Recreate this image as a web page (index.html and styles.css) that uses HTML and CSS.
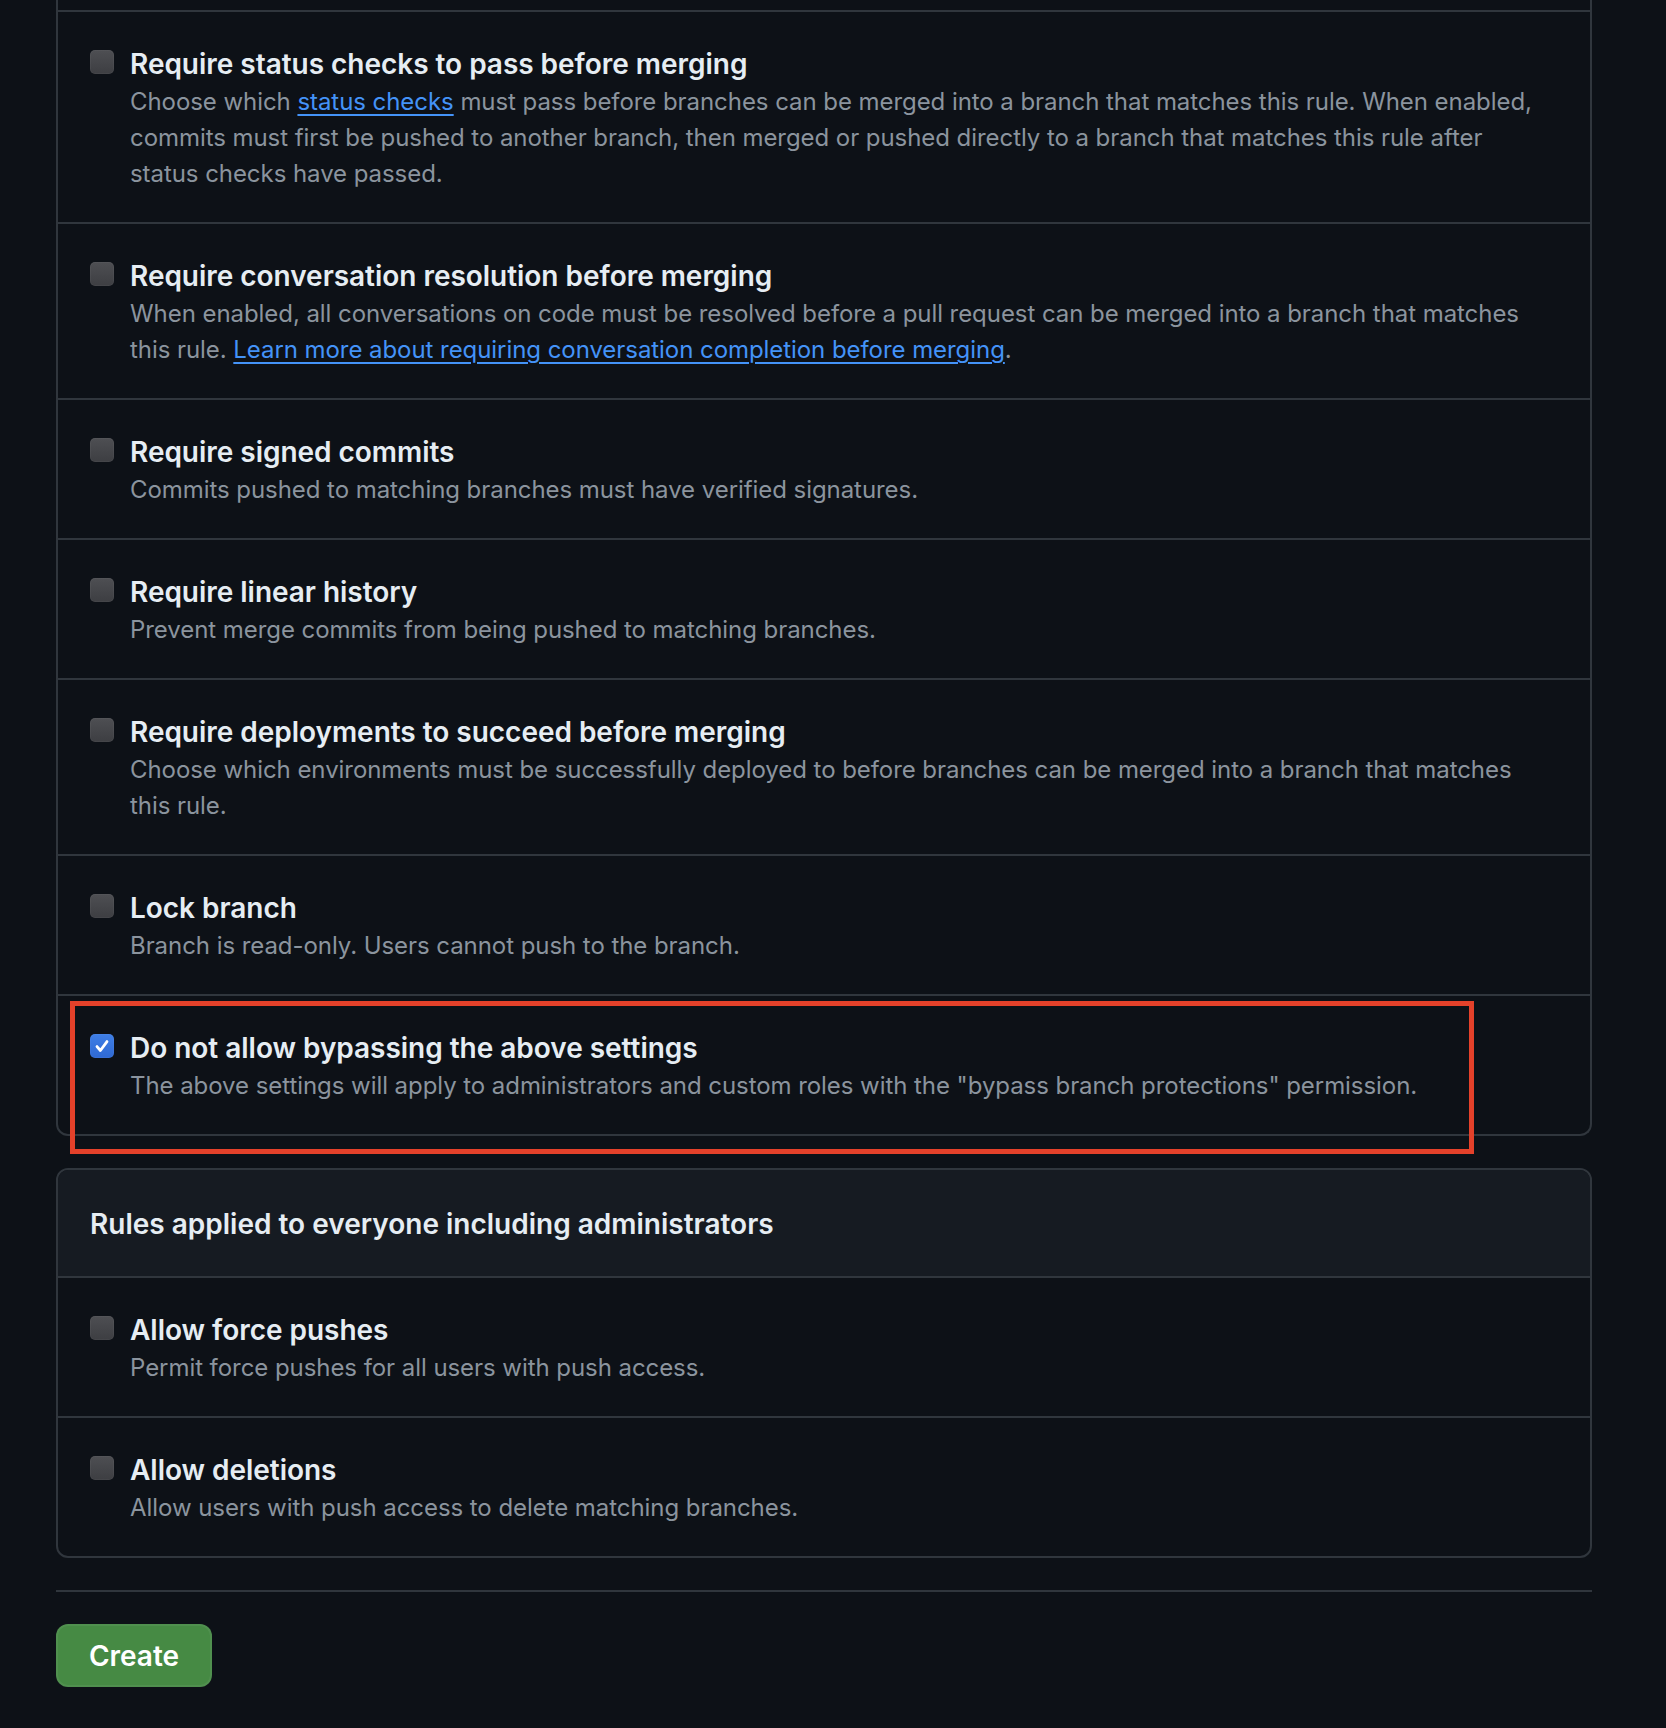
FILE: index.html
```html
<!DOCTYPE html>
<html lang="en">
<head>
<meta charset="utf-8">
<title>Branch protection rule</title>
<link rel="stylesheet" href="styles.css">
</head>
<body>
<main class="page">
  <section class="box box-cut">
    <div class="stub"></div>
    <div class="row">
      <span class="cb"></span>
      <div class="text">
        <div class="title">Require status checks to pass before merging</div>
        <div class="desc">Choose which <a href="#" class="link">status checks</a> must pass before branches can be merged into a branch that matches this rule. When enabled, commits must first be pushed to another branch, then merged or pushed directly to a branch that matches this rule after status checks have passed.</div>
      </div>
    </div>
    <div class="row">
      <span class="cb"></span>
      <div class="text">
        <div class="title">Require conversation resolution before merging</div>
        <div class="desc">When enabled, all conversations on code must be resolved before a pull request can be merged into a branch that matches this rule. <a href="#" class="link">Learn more about requiring conversation completion before merging</a>.</div>
      </div>
    </div>
    <div class="row">
      <span class="cb"></span>
      <div class="text">
        <div class="title">Require signed commits</div>
        <div class="desc">Commits pushed to matching branches must have verified signatures.</div>
      </div>
    </div>
    <div class="row">
      <span class="cb"></span>
      <div class="text">
        <div class="title">Require linear history</div>
        <div class="desc">Prevent merge commits from being pushed to matching branches.</div>
      </div>
    </div>
    <div class="row">
      <span class="cb"></span>
      <div class="text">
        <div class="title">Require deployments to succeed before merging</div>
        <div class="desc">Choose which environments must be successfully deployed to before branches can be merged into a branch that matches this rule.</div>
      </div>
    </div>
    <div class="row">
      <span class="cb"></span>
      <div class="text">
        <div class="title">Lock branch</div>
        <div class="desc">Branch is read-only. Users cannot push to the branch.</div>
      </div>
    </div>
    <div class="row row-marked">
      <span class="cb cb-on"><svg viewBox="0 0 24 24" width="24" height="24"><path d="M7 12.6l3.4 3.9L17 7.6" fill="none" stroke="#fff" stroke-width="2.8" stroke-linecap="round" stroke-linejoin="round"/></svg></span>
      <div class="text">
        <div class="title">Do not allow bypassing the above settings</div>
        <div class="desc">The above settings will apply to administrators and custom roles with the "bypass branch protections" permission.</div>
      </div>
      <div class="annotation"></div>
    </div>
  </section>

  <section class="box box-gap">
    <div class="box-header">Rules applied to everyone including administrators</div>
    <div class="row">
      <span class="cb"></span>
      <div class="text">
        <div class="title">Allow force pushes</div>
        <div class="desc">Permit force pushes for all users with push access.</div>
      </div>
    </div>
    <div class="row">
      <span class="cb"></span>
      <div class="text">
        <div class="title">Allow deletions</div>
        <div class="desc">Allow users with push access to delete matching branches.</div>
      </div>
    </div>
  </section>

  <hr class="sep">
  <button class="btn-create" type="button">Create</button>
</main>
</body>
</html>
```

FILE: styles.css
```css
html, body {
  margin: 0;
  padding: 0;
  background: #0d1117;
}
body {
  font-family: Inter, "Noto Sans", "Liberation Sans", sans-serif;
  color: #e6edf3;
  -webkit-font-smoothing: antialiased;
}
.page {
  width: 1536px;
  margin-left: 56px;
  padding-bottom: 40px;
}
.box {
  border: 2px solid #30363d;
  border-radius: 12px;
  overflow: visible;
}
.box-cut {
  border-top: 0;
  border-top-left-radius: 0;
  border-top-right-radius: 0;
}
.box-gap {
  margin-top: 32px;
}
.stub {
  height: 10px;
}
.row {
  display: flex;
  gap: 16px;
  padding: 33px 42px 30px 32px;
  border-top: 2px solid #30363d;
}
.row-marked {
  position: relative;
}
.cb {
  flex: none;
  width: 24px;
  height: 24px;
  margin-top: 5px;
  border-radius: 5px;
  background: linear-gradient(#4e4f53, #3d3e42);
  box-shadow: inset 0 0 0 1px rgba(255,255,255,0.04);
}
.cb-on {
  background: linear-gradient(#3f7fe6, #2f69d3);
}
.cb svg {
  display: block;
}
.text {
  flex: 1;
  min-width: 0;
}
.title {
  font-size: 28px;
  line-height: 39px;
  font-weight: 600;
  color: #e6edf3;
  letter-spacing: -0.03px;
}
.desc {
  font-size: 24px;
  line-height: 36px;
  color: #8b949e;
  letter-spacing: -0.06px;
}
.link {
  color: #4493f8;
  text-decoration: underline;
  text-underline-offset: 4px;
  text-decoration-thickness: 2px;
}
.box-header {
  background: #161b22;
  padding: 33px 32px 31px 32px;
  font-size: 28px;
  line-height: 42px;
  font-weight: 600;
  color: #e6edf3;
  border-top-left-radius: 10px;
  border-top-right-radius: 10px;
}
.sep {
  margin: 32px 0 0 0;
  border: 0;
  height: 2px;
  background: #30363d;
}
.btn-create {
  margin-top: 32px;
  display: block;
  width: 156px;
  height: 63px;
  border: 2px solid rgba(255,255,255,0.06);
  border-radius: 12px;
  background: #468a44;
  color: #ffffff;
  font-family: Inter, "Noto Sans", "Liberation Sans", sans-serif;
  font-size: 28px;
  font-weight: 600;
  padding: 0;
}
.annotation {
  position: absolute;
  left: 12px;
  top: 5px;
  width: 1404px;
  height: 153px;
  box-sizing: border-box;
  border: 5px solid #e4412a;
  pointer-events: none;
}
```
